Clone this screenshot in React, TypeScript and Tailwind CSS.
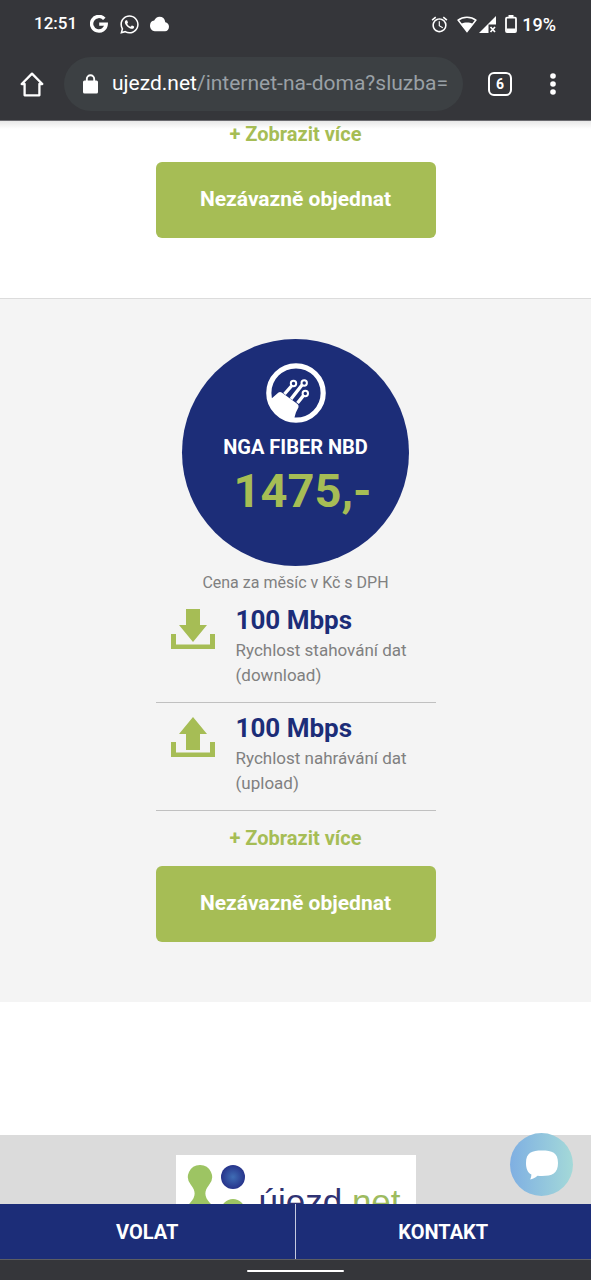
import { FaWhatsapp } from "react-icons/fa";
import { MdAlarm, MdCloud } from "react-icons/md";

const speeds = [
  { kind: "download", value: "100 Mbps", label: "Rychlost stahování dat" },
  { kind: "upload", value: "100 Mbps", label: "Rychlost nahrávání dat" },
];

const StatusBar = () => (
  <div className="flex items-center justify-between h-12 pl-[34px] pr-[35px]">
    <div className="flex items-center">
      <span className="text-[17px] font-medium">12:51</span>
      <svg viewBox="0 0 18 18" className="w-[18px] h-[18px] ml-[13px]">
        <path d="M14.300 3.800A7.300 7.300 0 1 0 16.200 9.100H9.200" fill="none" stroke="white" strokeWidth="3.400" />
      </svg>
      <FaWhatsapp className="w-[21px] h-[21px] ml-[11px]" />
      <MdCloud className="w-[19px] h-[18px] ml-[10px]" preserveAspectRatio="none" viewBox="0 2 24 20" />
    </div>
    <div className="flex items-center">
      <MdAlarm className="w-[19px] h-[19px]" />
      <svg viewBox="0 0 20 17" className="w-[20px] h-[17px] ml-[8px]">
        <path d="M10 1.200C6.300 1.200 3.200 2.500 1.200 4.200L10 15.500l8.800-11.300C16.800 2.500 13.700 1.200 10 1.200z" fill="none" stroke="white" strokeWidth="1.600" />
        <path d="M3.800 7.900C6 6.900 8 6.600 10 6.600s4 .3 6.200 1.300L10 15.800z" fill="white" />
      </svg>
      <svg viewBox="0 0 17 17" className="w-[17px] h-[17px] ml-[2px]">
        <path d="M17 0v8.500H9.500V17H0z" fill="white" />
        <path d="M11.500 11l4.500 5M16 11l-4.500 5" stroke="white" strokeWidth="1.700" />
      </svg>
      <svg viewBox="0 0 12 18" className="w-[12px] h-[18px] ml-[9px]">
        <path d="M3.500 0h5v3h-5z" fill="white" />
        <rect x="1" y="2.700" width="10" height="14.300" rx="1" fill="none" stroke="white" strokeWidth="1.800" />
        <path d="M1.500 13.500h9V17h-9z" fill="white" />
      </svg>
      <span className="ml-[5px] text-[18px] font-medium">19%</span>
    </div>
  </div>
);

const BrowserHeader = () => (
  <header className="shrink-0 bg-[#35363a] text-white border-b border-[#6b6b70]">
    <StatusBar />
    <div className="flex items-center h-[72px] pl-5 pr-[26px]">
      <button aria-label="Domů" className="shrink-0">
        <svg viewBox="0 0 24 25" className="w-6 h-[25px]">
          <path d="M12 1.600L1.700 12H4.600v11.300h14.800V12h2.900z" fill="none" stroke="white" strokeWidth="2.300" strokeLinejoin="round" />
        </svg>
      </button>
      <div className="flex items-center flex-1 min-w-0 h-[54px] ml-5 pl-[19px] pr-[6px] rounded-full bg-[#3c4043]">
        <svg viewBox="0 0 15 20" className="shrink-0 w-[15px] h-5">
          <path d="M3.800 8V5a3.700 3.700 0 0 1 7.400 0v3" fill="none" stroke="white" strokeWidth="1.900" />
          <rect y="6.500" width="15" height="13" rx="1.500" fill="white" />
        </svg>
        <span className="ml-[14px] text-[21px] whitespace-nowrap overflow-hidden">
          ujezd.net<span className="text-[#9aa0a6]">/internet-na-doma?sluzba=</span>
        </span>
      </div>
      <button
        aria-label="Karty"
        className="shrink-0 flex items-center justify-center w-6 h-6 ml-[25px] rounded-[6px] border-2 border-white text-[14px] font-bold"
      >
        6
      </button>
      <button aria-label="Nabídka" className="shrink-0 ml-[35px] mr-[6px]">
        <svg viewBox="0 0 12 24" className="w-3 h-6 fill-white">
          <circle cx="6" cy="4" r="2.800" />
          <circle cx="6" cy="12" r="2.800" />
          <circle cx="6" cy="20" r="2.800" />
        </svg>
      </button>
    </div>
  </header>
);

const FiberIcon = () => (
  <svg viewBox="0 0 60 60" className="w-[60px] h-[60px]">
    <circle cx="30" cy="30" r="27.200" fill="none" stroke="white" strokeWidth="5.200" />
    <path d="M5 36l7.500-6.500q1.500-1 3.200 0L31.500 41q1.500 1.300 1 3.200l-2.500 5q-.8 2.500-2 7Q11 54 5 36z" fill="white" />
    <g fill="none" stroke="white">
      <path d="M18.500 31L25.500 23M25 36l11-14M31.500 40l6-7.500" strokeWidth="3.400" />
      <circle cx="27.500" cy="20.500" r="2.700" strokeWidth="2" />
      <circle cx="38.200" cy="20" r="2.700" strokeWidth="2" />
      <circle cx="39.300" cy="30.500" r="2.700" strokeWidth="2" />
    </g>
  </svg>
);

const SpeedIcon = ({ kind }: { kind: string }) => (
  <svg viewBox="0 0 44 40" className="shrink-0 w-11 h-10 fill-[#a6bd55]">
    <path d="M0 25h5v10.500h34V25h5v15H0z" />
    {kind === "download" ? (
      <path d="M15 0h14v16h7L22 33 8 16h7z" />
    ) : (
      <path d="M15 33h14V17h7L22 0 8 17h7z" />
    )}
  </svg>
);

const OrderActions = () => (
  <>
    <button className="block mx-auto mb-[15px] leading-[26px] text-[20px] font-bold text-[#a6bd55]">
      + Zobrazit více
    </button>
    <button className="block w-full h-[76px] rounded-[6px] bg-[#a6bd55] text-[21px] font-bold text-white">
      Nezávazně objednat
    </button>
  </>
);

const Tariff = () => (
  <section className="pt-10 pb-[60px] border-t border-[#dcdcdc] bg-[#f4f4f4]">
    <div className="w-[280px] mx-auto">
      <div className="flex flex-col items-center w-[227px] h-[227px] mx-auto pt-6 rounded-full bg-[#1c2d78]">
        <FiberIcon />
        <h2 className="mt-3 text-[20px] leading-[24px] font-bold text-white">NGA FIBER NBD</h2>
        <p className="pl-[14px] mt-1 text-[47px] leading-[56px] font-bold text-[#a6bd55]">1475,-</p>
      </div>
      <p className="mt-[5px] text-[16px] leading-[24px] text-center text-[#808080]">Cena za měsíc v Kč s DPH</p>
      <ul>
        {speeds.map((speed) => (
          <li key={speed.kind} className="flex pt-[9px] pb-[14px] pl-[15px] border-b border-[#c0c0c0]">
            <div className="pt-[5px]">
              <SpeedIcon kind={speed.kind} />
            </div>
            <div className="pl-[21px]">
              <h3 className="mb-[2px] text-[26px] leading-[32px] font-bold text-[#1c2d78]">{speed.value}</h3>
              <p className="text-[17px] leading-[25px] text-[#808080]">
                {speed.label}
                <br />({speed.kind})
              </p>
            </div>
          </li>
        ))}
      </ul>
      <div className="pt-[14px]">
        <OrderActions />
      </div>
    </div>
  </section>
);

const Logo = () => (
  <a href="#" className="flex w-60 h-[90px] mx-auto pl-[11px] pt-[10px] bg-white">
    <svg viewBox="0 0 60 70" className="shrink-0 w-[60px] h-[70px]">
      <defs>
        <radialGradient id="dot">
          <stop offset="0" stopColor="#3f6db5" />
          <stop offset="1" stopColor="#27348b" />
        </radialGradient>
      </defs>
      <path
        d="M13 0a12 12 0 0 1 9 20c-5 6-5 12 1 18a14 14 0 1 1-20 0c6-6 6-12 1-18A12 12 0 0 1 13 0z"
        fill="#9dc463"
      />
      <circle cx="46" cy="12" r="12" fill="url(#dot)" />
      <circle cx="46" cy="46" r="12" fill="#9dc463" />
    </svg>
    <span className="pl-[12px] pt-[17px] font-['Liberation_Sans',sans-serif] text-[35px] leading-[40px] text-[#2f3273]">
      újezd<span className="text-[#9dbb5f]">.net</span>
    </span>
  </a>
);

const ChatButton = () => (
  <button
    aria-label="Chat"
    className="absolute right-[18px] bottom-2 flex items-center justify-center w-[63px] h-[63px] rounded-full bg-linear-to-r from-[#7fafe2] to-[#a4d9d8]"
  >
    <svg viewBox="0 0 32 30" className="w-8 h-[30px]">
      <path
        d="M16 0.500c10 0 16 2 16 12.500s-6 13-16 13c-1.500 0-3 0-4.500-.2C9 28 6.500 29.300 4.200 29.500c.8-1.500 1.200-3.200 1.200-5C1.500 22.500 0 18.500 0 13 0 2.500 6 .5 16 .5z"
        fill="white"
      />
    </svg>
  </button>
);

const App = () => {
  return (
    <div className="flex flex-col h-screen overflow-hidden bg-white font-[Roboto,sans-serif]">
      <BrowserHeader />

      <div className="relative flex-1 min-h-0">
        <main className="h-full overflow-hidden">
          <div className="bg-linear-to-b from-[#e8e8e8] to-white to-[8px] pb-[60px]">
            <div className="w-[280px] mx-auto">
              <OrderActions />
            </div>
          </div>
          <Tariff />
          <footer className="mt-[133px] pt-5 pb-20 bg-[#dbdbdb]">
            <Logo />
          </footer>
        </main>
        <ChatButton />
      </div>

      <nav className="shrink-0 grid grid-cols-2 h-[55px] bg-[#1c2d78] text-[20px] font-bold text-white">
        <a href="#volat" className="flex items-center justify-center border-r border-[#c5cae0]">
          VOLAT
        </a>
        <a href="#kontakt" className="flex items-center justify-center">
          KONTAKT
        </a>
      </nav>
      <div className="shrink-0 flex justify-center h-[21px] pt-[10px] border-t border-[#5c5d62] bg-[#35363a]">
        <div className="w-[97px] h-[2px] rounded-full bg-white" />
      </div>
    </div>
  );
};

export default App;
